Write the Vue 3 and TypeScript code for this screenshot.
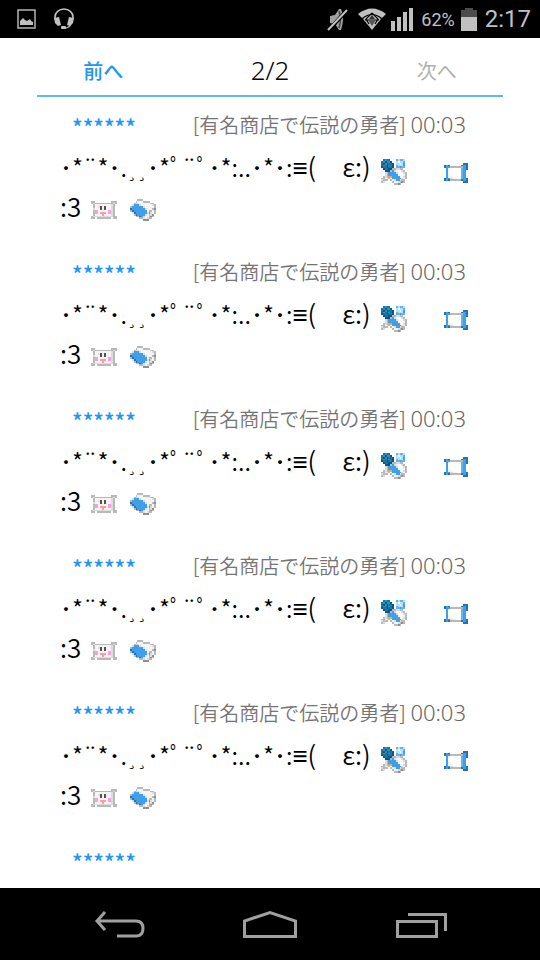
<script setup lang="ts">
import { ref } from 'vue'

type Pixel = { x: number; y: number; fill: string }
type SpriteName = 'balloon' | 'screen' | 'pillow' | 'eraser'

const palette: Record<string, string> = {
  t: '#1b75a3', T: '#2f93bd', d: '#0e567f', c: '#b5e0fa', b: '#62b5ef', B: '#3f9fe8',
  D: '#2472b4', g: '#b9b9b9', G: '#8f8f8f', w: '#f4f4f4', W: '#ffffff', l: '#dcdcdc',
  o: '#f5a83c', p: '#ff9de0', r: '#ff9d9d', k: '#5a5050', m: '#f7d9d0'
}

const maps: Record<SpriteName, string[]> = {
  balloon: [
    '.tTtt...bcbbc.',
    'tTdTTd..cWccb.',
    'tdTdttd.ccWcB.',
    'tTtdTtd.bcccB.',
    'dttdttd.bbBbb.',
    '.dttddggllgg..',
    '..dddgBlwWWlg.',
    '..lgBBBBlWWWlg',
    '..lgBBBBBwWWwg',
    '.glgooBBBBwWlg',
    'ggwlgwBBBBBlwg',
    'lggg.gwlBBlgg.',
    'gl....gwwlgGg.',
    '.......ggGg...'
  ],
  screen: [
    '..............',
    '..............',
    '..........DDD.',
    'DBD......DBBD.',
    'DBBgggggggBBD.',
    '.BwWWWWWWbBBD.',
    '.BWWWWWWWbBB..',
    '.BWWWWWWWbBB..',
    '.BwWWWWWWbBB..',
    '.BwwwWWWWbBB..',
    'DBBllwwWWbBBD.',
    'DBDggggggDBBD.',
    '..........DDD.',
    '..............'
  ],
  pillow: [
    '..............',
    '..............',
    'gg.........ggg',
    'glgggggggggglg',
    '.gwwwwwwwwwlg.',
    '.gwwmkwkwwwlg.',
    '.lwwwkwkwwwlg.',
    '.gppwwwwwpplg.',
    '.gppwrrrwpplg.',
    '.gwwwwrwwwwlg.',
    'glllllllllllgg',
    'gg.gggggggg.gg',
    '..............',
    '..............'
  ],
  eraser: [
    '..............',
    '....ggg.......',
    '...gwwwgggg...',
    '..gllwwwwwwgg.',
    '.lBBBlwwwwwwlg',
    'gBBBBBBlwwwwwg',
    'DBBBBBBBlwwwgG',
    'gDBBBBBBBwggwg',
    '.lDBBBBBBlGlwg',
    '..gDBBBBlwglG.',
    '...ggDBlwwgGg.',
    '.....gglwlgg..',
    '.......GGG....',
    '..............'
  ]
}

function toPixels(rows: string[]): Pixel[] {
  return rows.flatMap((row, y) =>
    [...row].flatMap((key, x) => (key === '.' ? [] : [{ x, y, fill: palette[key] }]))
  )
}

const sprites: Record<SpriteName, Pixel[]> = {
  balloon: toPixels(maps.balloon),
  screen: toPixels(maps.screen),
  pillow: toPixels(maps.pillow),
  eraser: toPixels(maps.eraser)
}

type Run = { text: string; kind?: 'mark' | 'math' | 'face' }
type Line = { runs: Run[]; sprites: SpriteName[]; wide: boolean }
type Message = { id: number; author: string; place: string; time: string; lines: Line[] }

const lines: Line[] = [
  {
    runs: [
      { text: '･*¨*･.' },
      { text: '¸¸', kind: 'mark' },
      { text: '･*ﾟ¨ﾟ･*:..･*･:' },
      { text: '≡', kind: 'math' },
      { text: '(　ε:)', kind: 'face' }
    ],
    sprites: ['balloon', 'screen'],
    wide: true
  },
  { runs: [{ text: ':3', kind: 'face' }], sprites: ['pillow', 'eraser'], wide: false }
]

const messages = ref<Message[]>([
  ...Array.from({ length: 5 }, (_, id) => ({
    id,
    author: '******',
    place: '[有名商店で伝説の勇者]',
    time: '00:03',
    lines
  })),
  { id: 5, author: '******', place: '', time: '', lines: [] }
])
</script>

<template>
  <div class="screen">
    <header class="status">
      <div class="status-group left">
        <svg width="20" height="20" viewBox="0 0 20 20">
          <rect x="1" y="1" width="17" height="18" fill="none" stroke="#b4b4b4" stroke-width="1.5" />
          <path d="M3 16v-4l3-3 2 2 2 1 3-2 1 2 2 1v3z" fill="#c0c0c0" />
        </svg>
        <svg width="22" height="22" viewBox="0 0 22 22">
          <path d="M2 11V9a9 8 0 0 1 18 0v2" fill="none" stroke="#c0c0c0" stroke-width="1.6" />
          <path d="M1 10l5-1 2 8-3 1-3-3zM21 10l-5-1-2 8 3 1 3-3z" fill="#c0c0c0" />
          <path d="M18 16q-2 4-6 4" fill="none" stroke="#c0c0c0" stroke-width="1.4" />
          <rect x="8" y="18" width="5" height="3" rx="1" fill="#c0c0c0" />
        </svg>
      </div>
      <div class="status-group right">
        <svg width="22" height="24" viewBox="0 0 22 24">
          <path d="M3 9l5-1 4-6h2q4 9 0 21h-2l-4-6-5-1z" fill="#a2a2a2" />
          <path d="M12 4q3 8 0 17" fill="none" stroke="#454545" stroke-width="1.5" />
          <path d="M20 3L2 23" stroke="#000" stroke-width="4" />
          <path d="M20 3L1 23" stroke="#c0c0c0" stroke-width="2" />
        </svg>
        <svg width="30" height="24" viewBox="0 0 30 24">
          <path d="M1 7Q15-4 29 7l-4 4Q15 3 5 11z" fill="#c0c0c0" />
          <path d="M6 12Q15 4 24 12l-9 11z" fill="#c0c0c0" />
          <path d="M15 6l-6 6 3 5M15 6l6 6-3 5M8 13h14" fill="none" stroke="#000" stroke-width="1.2" />
          <path d="M11 13h8l-4 6z" fill="#555" />
          <path d="M15 8l3 4h-6z" fill="#333" />
        </svg>
        <svg class="signal" width="22" height="24" viewBox="0 0 22 24" fill="#c0c0c0">
          <path d="M0 14h4v10h-4zM6 10h4v14H6zM12 5h4v19h-4zM18 1h4v23h-4z" />
        </svg>
        <span class="percent">62%</span>
        <svg class="battery" width="16" height="24" viewBox="0 0 16 24">
          <path d="M0 3h4V1h8v2h4v8H0z" fill="#4c4c4c" />
          <path d="M0 10h16v14H0z" fill="#c0c0c0" />
        </svg>
        <span class="clock">2:17</span>
      </div>
    </header>

    <main class="content">
      <nav class="pager">
        <button type="button" class="page-button">前へ</button>
        <span class="page-count">2/2</span>
        <button type="button" class="page-button next" disabled>次へ</button>
      </nav>
      <ul class="messages">
        <li v-for="message in messages" :key="message.id" class="message">
          <div class="meta">
            <a href="#" class="author">{{ message.author }}</a>
            <span v-if="message.place" class="place">{{ message.place }} <time>{{ message.time }}</time></span>
          </div>
          <p
            v-for="(line, index) in message.lines"
            :key="index"
            class="line"
            :class="{ wide: line.wide }"
          >
            <span class="words"><span v-for="(run, i) in line.runs" :key="i" :class="run.kind">{{ run.text }}</span></span>
            <span class="sprites">
              <svg v-for="name in line.sprites" :key="name" width="26" height="26" viewBox="0 0 14 14" shape-rendering="crispEdges">
                <rect v-for="p in sprites[name]" :key="`${p.x}-${p.y}`" :x="p.x" :y="p.y" width="1" height="1" :fill="p.fill" />
              </svg>
            </span>
          </p>
        </li>
      </ul>
    </main>

    <footer class="system-nav">
      <button type="button" aria-label="Back">
        <svg width="54" height="30" viewBox="0 0 54 30">
          <path d="M13 3L5 12l8 9M5 12h39q7 0 7 7.500t-7 7.500H25" fill="none" stroke="#a0a0a0" stroke-width="3" />
        </svg>
      </button>
      <button type="button" aria-label="Home">
        <svg width="56" height="30" viewBox="0 0 56 30">
          <path d="M2.500 27.500V12L28 3.500 53.500 12v15.500z" fill="none" stroke="#a0a0a0" stroke-width="3" />
        </svg>
      </button>
      <button type="button" aria-label="Recent apps">
        <svg width="54" height="30" viewBox="0 0 54 30">
          <path d="M3.500 12.500h39v15h-39zM14 5.500h37.500V22" fill="none" stroke="#a0a0a0" stroke-width="3" />
        </svg>
      </button>
    </footer>
  </div>
</template>

<style>
body {
  margin: 0;
}
</style>

<style scoped>
.screen {
  display: flex;
  flex-direction: column;
  height: 100vh;
  background: #fff;
  color: #000;
  font-family: "Noto Sans CJK JP", "Noto Sans", sans-serif;
}
svg {
  display: block;
  flex: none;
}
button {
  border: 0;
  padding: 0;
  background: none;
  font: inherit;
}
.status {
  display: flex;
  flex: none;
  justify-content: space-between;
  height: 38px;
  padding: 0 9px 0 17px;
  background: #000;
  color: #c0c0c0;
  font-family: Roboto, sans-serif;
}
.status-group {
  display: flex;
  align-items: center;
}
.left {
  gap: 16px;
}
.right {
  gap: 8px;
}
.signal {
  margin-left: -4px;
}
.percent {
  font-size: 18px;
}
.battery {
  margin-left: -2px;
}
.clock {
  font-size: 24px;
}
.content {
  flex: 1;
  min-height: 0;
  overflow: hidden;
}
.pager {
  display: grid;
  grid-template-columns: repeat(3, 1fr);
  align-items: center;
  height: 57px;
  padding: 0 20px;
  text-align: center;
  font-size: 20px;
  line-height: 30px;
}
.page-button {
  padding-top: 8px;
  color: #2196f3;
  font-weight: 500;
}
.next {
  color: #b0b0b0;
  font-weight: 400;
}
.page-count {
  padding-top: 6px;
  font-family: "Noto Sans", sans-serif;
  font-size: 26px;
  font-weight: 300;
}
.messages {
  margin: 0 37px;
  padding: 8px 0 0;
  border-top: 2px solid #64b5f6;
  list-style: none;
}
.message {
  height: 147px;
}
.meta {
  display: flex;
  align-items: center;
  justify-content: space-between;
  height: 38px;
  padding: 0 37px 0 35px;
  font-size: 20px;
  line-height: 38px;
  white-space: nowrap;
}
.author {
  padding-top: 4px;
  color: #2196f3;
  font-size: 22px;
  font-weight: 500;
  text-decoration: none;
}
.place {
  color: #757575;
  font-weight: 350;
}
.place time {
  color: #666;
  font-family: "Noto Sans", sans-serif;
  font-size: 22px;
}
.line {
  display: flex;
  align-items: center;
  gap: 10px;
  height: 38px;
  margin: 0;
  padding: 0 0 0 23px;
  font-size: 24px;
  font-weight: 350;
  line-height: 38px;
  white-space: nowrap;
}
.meta + .line {
  margin-top: 6px;
}
.mark {
  font-family: "DejaVu Sans", sans-serif;
  font-size: 20px;
}
.math {
  font-family: "DejaVu Sans", sans-serif;
  font-size: 26px;
}
.face {
  font-size: 26px;
}
.sprites {
  display: flex;
  gap: 13px;
  padding-top: 8px;
}
.wide .sprites {
  gap: 37px;
}
.system-nav {
  display: grid;
  grid-template-columns: repeat(3, 1fr);
  flex: none;
  align-items: center;
  justify-items: center;
  height: 72px;
  padding: 0 44px;
  background: #000;
}
</style>
